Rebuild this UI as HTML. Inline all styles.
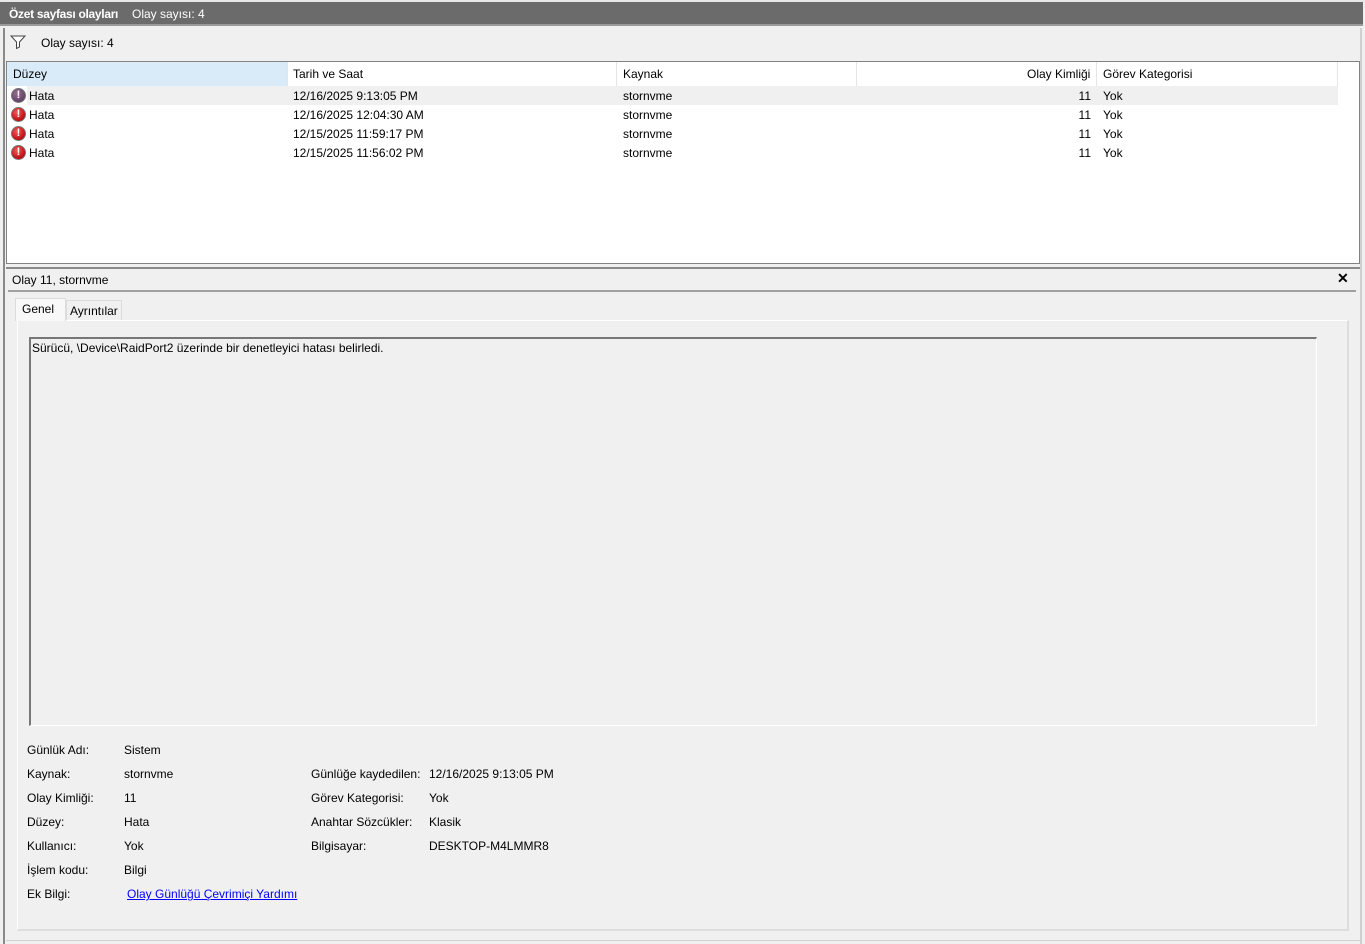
<!DOCTYPE html>
<html><head><meta charset="utf-8"><style>
*{margin:0;padding:0;box-sizing:border-box}
body{width:1365px;height:944px;background:#f0f0f0;font-family:"Liberation Sans",sans-serif;font-size:12px;color:#000;position:relative;overflow:hidden}
.a{position:absolute;white-space:nowrap}
.ic{position:absolute;width:15px;height:15px;border-radius:50%;background:radial-gradient(circle at 40% 35%,#f06060,#c8161b 60%,#8a0a0a);border:1px solid #777;color:#fff;font-weight:bold;font-size:11px;line-height:13px;text-align:center}
</style></head><body>
<div class="a" style="left:0;top:0;width:1365px;height:2px;background:#e8e8e8"></div>
<div class="a" style="left:0;top:2px;width:1363px;height:24px;background:#6b6b6b;border-bottom:2px solid #9a9a9a"></div>
<div class="a" style="left:9px;top:7px;color:#fff;font-weight:bold;letter-spacing:-0.3px">Özet sayfası olayları</div>
<div class="a" style="left:132px;top:7px;color:#fff">Olay sayısı: 4</div>
<div class="a" style="left:3px;top:28px;width:2px;height:916px;background:#8a8a8a"></div>
<div class="a" style="left:1360px;top:28px;width:2px;height:916px;background:#d0d0d0"></div>
<svg class="a" style="left:10px;top:35px" width="16" height="14" viewBox="0 0 16 14"><path d="M1 1h14L9.5 7v5l-3 1.5V7z" fill="#fff" stroke="#444"/></svg>
<div class="a" style="left:41px;top:36px">Olay sayısı: 4</div>
<div class="a" style="left:6px;top:61px;width:1354px;height:203px;background:#fff;border:1px solid #828282"></div>
<div class="a" style="left:7px;top:62px;width:280px;height:24px;background:#d9ebf9"></div>
<div class="a" style="left:287px;top:62px;width:1px;height:24px;background:#e5e5e5"></div>
<div class="a" style="left:616px;top:62px;width:1px;height:24px;background:#e5e5e5"></div>
<div class="a" style="left:856px;top:62px;width:1px;height:24px;background:#e5e5e5"></div>
<div class="a" style="left:1096px;top:62px;width:1px;height:24px;background:#e5e5e5"></div>
<div class="a" style="left:1337px;top:62px;width:1px;height:24px;background:#e5e5e5"></div>
<div class="a" style="left:13px;top:67px">Düzey</div>
<div class="a" style="left:293px;top:67px">Tarih ve Saat</div>
<div class="a" style="left:623px;top:67px">Kaynak</div>
<div class="a" style="left:1027px;top:67px">Olay Kimliği</div>
<div class="a" style="left:1103px;top:67px">Görev Kategorisi</div>
<div class="a" style="left:27px;top:86px;width:1311px;height:19px;background:#f0f0f0"></div>
<div class="ic" style="left:11px;top:88px;background:radial-gradient(circle at 40% 35%,#9c6c8c,#6a4a70 60%,#4a3050)">!</div>
<div class="ic" style="left:11px;top:107px">!</div>
<div class="ic" style="left:11px;top:126px">!</div>
<div class="ic" style="left:11px;top:145px">!</div>
<div class="a" style="left:29px;top:87px;line-height:19px">Hata<br>Hata<br>Hata<br>Hata</div>
<div class="a" style="left:293px;top:87px;line-height:19px">12/16/2025 9:13:05 PM<br>12/16/2025 12:04:30 AM<br>12/15/2025 11:59:17 PM<br>12/15/2025 11:56:02 PM</div>
<div class="a" style="left:623px;top:87px;line-height:19px">stornvme<br>stornvme<br>stornvme<br>stornvme</div>
<div class="a" style="left:1070px;width:21px;text-align:right;top:87px;line-height:19px">11<br>11<br>11<br>11</div>
<div class="a" style="left:1103px;top:87px;line-height:19px">Yok<br>Yok<br>Yok<br>Yok</div>
<div class="a" style="left:6px;top:267px;width:1354px;height:2px;background:#8a8a8a"></div>
<div class="a" style="left:12px;top:273px">Olay 11, stornvme</div>
<div class="a" style="left:1337px;top:270px;font-weight:bold;font-size:14px">✕</div>
<div class="a" style="left:8px;top:290px;width:1348px;height:2px;background:#a0a0a0"></div>
<div class="a" style="left:17px;top:320px;width:1332px;height:611px;border:1px solid #fff;border-right:2px solid #ddd;border-bottom:2px solid #ddd"></div>
<div class="a" style="left:15px;top:298px;width:51px;height:23px;background:#f8f8f8;border:1px solid #dcdcdc;border-bottom:none"></div>
<div class="a" style="left:22px;top:302px">Genel</div>
<div class="a" style="left:66px;top:300px;width:56px;height:20px;border:1px solid #dcdcdc;border-bottom:none"></div>
<div class="a" style="left:70px;top:304px">Ayrıntılar</div>
<div class="a" style="left:29px;top:337px;width:1288px;height:389px;border-top:2px solid #777;border-left:2px solid #777;border-right:1px solid #fff;border-bottom:1px solid #fff"></div>
<div class="a" style="left:32px;top:341px">Sürücü, \Device\RaidPort2 üzerinde bir denetleyici hatası belirledi.</div>
<div class="a" style="left:27px;top:738px;line-height:24px">Günlük Adı:<br>Kaynak:<br>Olay Kimliği:<br>Düzey:<br>Kullanıcı:<br>İşlem kodu:<br>Ek Bilgi:</div>
<div class="a" style="left:124px;top:738px;line-height:24px">Sistem<br>stornvme<br>11<br>Hata<br>Yok<br>Bilgi<br><span style="color:#00f;text-decoration:underline;margin-left:3px">Olay Günlüğü Çevrimiçi Yardımı</span></div>
<div class="a" style="left:311px;top:762px;line-height:24px">Günlüğe kaydedilen:<br>Görev Kategorisi:<br>Anahtar Sözcükler:<br>Bilgisayar:</div>
<div class="a" style="left:429px;top:762px;line-height:24px">12/16/2025 9:13:05 PM<br>Yok<br>Klasik<br>DESKTOP-M4LMMR8</div>
<div class="a" style="left:6px;top:940px;width:1354px;height:1px;background:#d0d0d0"></div>
</body></html>
